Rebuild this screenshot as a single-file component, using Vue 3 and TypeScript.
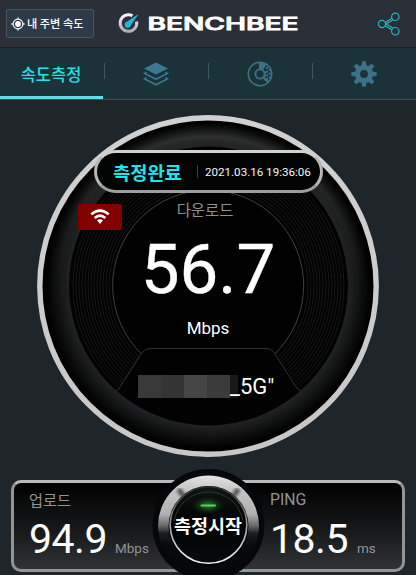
<script setup lang="ts">
interface Metric { label: string; value: string; unit: string; kind: string }

const download = { label: '다운로드', value: '56.7', unit: 'Mbps' }
const metrics: Metric[] = [
  { label: '업로드', value: '94.9', unit: 'Mbps', kind: 'upload' },
  { label: 'PING', value: '18.5', unit: 'ms', kind: 'ping' },
]
const rings: number[] = Array.from({ length: 13 }, (_, i) => 99.5 + i * 3)
const teeth: number[] = [0, 45, 90, 135, 180, 225, 270, 315]
const mosaic: string[] = ['a', 'b', 'c', 'd', 'e']
</script>

<template>
  <div class="app">
    <header class="header">
      <button class="nearby">
        <svg width="14" height="14" viewBox="0 0 14 14">
          <circle cx="7" cy="7" r="4.9" fill="none" stroke="#f4f6f7" stroke-width="1.1" />
          <circle cx="7" cy="7" r="2.9" fill="#fff" />
          <path d="M7 .4v2M7 11.6v2M.4 7h2M11.6 7h2" stroke="#f4f6f7" stroke-width="1.3" />
        </svg>
        <span>내 주변 속도</span>
      </button>
      <svg class="logo" width="184" height="28" viewBox="0 0 184 28">
        <defs>
          <linearGradient id="logoRing" x2="0" y2="1">
            <stop offset="0" stop-color="#f5f5f5" /><stop offset="1" stop-color="#a8adb0" />
          </linearGradient>
        </defs>
        <path d="M15.5 5.8A8.3 8.3 0 1 0 19.6 11.5" fill="none" stroke="url(#logoRing)" stroke-width="3" />
        <path d="M21.7 3.7L14 15.2A3.2 3.2 0 1 1 10.2 11.5Z" fill="#24b5d2" />
        <text x="30.500" y="20.200" class="wordmark" textLength="151" lengthAdjust="spacingAndGlyphs">BENCHBEE</text>
      </svg>
      <svg class="share" width="24" height="26" viewBox="0 0 24 26">
        <g fill="none" stroke="#2ab5b9" stroke-width="1.2">
          <path d="M8.1 11.4l6.6-4M9.1 13.1l6.7-4M8.1 14.7l6.6 4M9.1 12.9l6.7 4" />
          <circle cx="5" cy="13" r="3.6" fill="#2b2f37" />
          <circle cx="18.3" cy="5.8" r="3.7" fill="#2b2f37" />
          <circle cx="18.3" cy="20.2" r="3.7" fill="#2b2f37" />
        </g>
      </svg>
    </header>

    <nav class="tabs">
      <div class="tab active">속도측정</div>
      <div class="tab">
        <svg width="26" height="26" viewBox="0 0 26 26">
          <path d="M13 1.500L25 7.500L13 13.500L1 7.500Z" fill="#3d7890" />
          <path d="M3.500 11.300L1.700 12.500 13 18.200 24.300 12.500 22.500 11.300M3.500 16.700L1.700 18 13 23.800 24.300 18 22.500 16.700" fill="none" stroke="#3d7890" stroke-width="1.700" />
        </svg>
      </div>
      <div class="tab">
        <svg width="26" height="26" viewBox="0 0 26 26">
          <circle cx="13" cy="13" r="11.7" fill="none" stroke="#3d7185" stroke-width="1.6" />
          <path d="M13 1.3A11.7 11.7 0 0 1 19.6 3.4L15.6 9.5A4.4 4.4 0 0 0 12 8.7V1.4Z" fill="#3d7185" />
          <circle cx="13" cy="13" r="4.6" fill="none" stroke="#3d7185" stroke-width="1.9" />
          <path d="M16.5 16.5l4.6 4.6" stroke="#3d7185" stroke-width="2.2" />
          <path d="M20 6v14M22.8 8v10M18.2 10.5v5" fill="none" stroke="#3d7185" stroke-width="2" stroke-dasharray="2 1.7" />
        </svg>
      </div>
      <div class="tab">
        <svg width="26" height="26" viewBox="0 0 26 26">
          <path v-for="a in teeth" :key="a" d="M10.2 6L11.3.3h3.4L15.8 6Z" fill="#3d7185" :transform="`rotate(${a} 13 13)`" />
          <circle cx="13" cy="13" r="6.5" fill="none" stroke="#3d7185" stroke-width="5.2" />
        </svg>
      </div>
    </nav>

    <main class="dial">
      <svg class="dial-art" width="416" height="370" viewBox="0 101 416 370">
        <defs>
          <radialGradient id="bezel" gradientUnits="userSpaceOnUse" cx="208.5" cy="286" r="168">
            <stop offset=".83" stop-color="#202323" /><stop offset=".88" stop-color="#151717" />
            <stop offset=".96" stop-color="#020202" /><stop offset="1" stop-color="#000" />
          </radialGradient>
          <radialGradient id="shine" gradientUnits="userSpaceOnUse" cx="208" cy="286" r="168">
            <stop offset=".83" stop-color="#303232" stop-opacity=".2" /><stop offset=".89" stop-color="#333535" />
            <stop offset=".98" stop-color="#111" stop-opacity="0" />
          </radialGradient>
          <linearGradient id="topFade" x2="0" y2="1">
            <stop offset="0" stop-color="#fff" /><stop offset=".5" stop-color="#000" />
          </linearGradient>
          <mask id="upper"><rect x="30" y="110" width="356" height="350" fill="url(#topFade)" /></mask>
          <clipPath id="grooves"><path d="M0 100H416V400H307L300 391 275 353Q272 348.500 266 348.500H150Q145 348.500 142 353L117 391 110 400H0Z" /></clipPath>
          <linearGradient id="rim" x2="0" y2="1"><stop offset="0" stop-color="#d1d1d1" /><stop offset="1" stop-color="#c7c7c7" /></linearGradient>
        </defs>
        <circle cx="208" cy="286" r="168" fill="url(#bezel)" />
        <circle cx="208" cy="286" r="168" fill="url(#shine)" mask="url(#upper)" />
        <circle cx="208" cy="286" r="168.200" fill="none" stroke="url(#rim)" stroke-width="5.400" />
        <circle cx="208.500" cy="286" r="139.500" fill="#020202" />
        <g clip-path="url(#grooves)" fill="none">
          <circle v-for="r in rings" :key="r" cx="208.500" cy="286" :r="r" stroke="#171717" stroke-width="1" />
        </g>
        <path d="M141.500 354A95.500 95.500 0 1 1 274.800 354" fill="#000" stroke="#404040" />
        <path d="M116 391Q119 390 120 387L141 354Q144.500 348.500 150 348.500H266Q272 348.500 275 354L296 387Q298 390 301 391" fill="none" stroke="#303030" />
      </svg>

      <div class="status"><strong>측정완료</strong><i></i><time>2021.03.16 19:36:06</time></div>
      <div class="badge">
        <svg width="20" height="16" viewBox="0 0 20 16" fill="none" stroke="#fff">
          <path d="M1.300 5.400Q10-2.200 18.700 5.400M4.700 9Q10 4.300 15.300 9" stroke-width="2.500" />
          <path d="M7 11.300Q10 9 13 11.300L10 15Z" fill="#fff" stroke="none" />
        </svg>
      </div>
      <div class="reading">
        <span class="reading-label">{{ download.label }}</span>
        <span class="reading-value">{{ download.value }}</span>
        <span class="reading-unit">{{ download.unit }}</span>
      </div>
      <div class="network">
        <span class="mosaic"><i v-for="m in mosaic" :key="m" :class="m"></i></span>
        <span class="ssid">_5G"</span>
      </div>
    </main>

    <footer class="results">
      <section v-for="m in metrics" :key="m.kind" class="metric" :class="m.kind">
        <span class="metric-label">{{ m.label }}</span>
        <div class="metric-row"><b>{{ m.value }}</b><small>{{ m.unit }}</small></div>
      </section>
      <button class="start">
        <svg width="116" height="116" viewBox="150 467 116 116">
          <defs>
            <linearGradient id="metal" x2="0" y2="1">
              <stop offset="0" stop-color="#e4e4e4" /><stop offset=".15" stop-color="#c3c3c3" />
              <stop offset=".38" stop-color="#b2b2b2" /><stop offset=".5" stop-color="#666" />
              <stop offset=".57" stop-color="#1c1e21" /><stop offset=".7" stop-color="#08090b" /><stop offset="1" stop-color="#050607" />
            </linearGradient>
            <linearGradient id="lens" x2="0" y2="1"><stop offset="0" stop-color="#111516" /><stop offset=".5" stop-color="#000" /><stop offset="1" stop-color="#080b0c" /></linearGradient>
            <linearGradient id="edge" x2="0" y2="1"><stop offset="0" stop-color="#252829" /><stop offset=".5" stop-color="#a0a0a0" /><stop offset="1" stop-color="#f2f2f2" /></linearGradient>
            <radialGradient id="glow"><stop offset="0" stop-color="#35ba3d" stop-opacity=".75" /><stop offset="1" stop-color="#164018" stop-opacity="0" /></radialGradient>
            <filter id="soft"><feGaussianBlur stdDeviation="1.600" /></filter>
          </defs>
          <circle cx="208.500" cy="525" r="56" fill="#05070a" />
          <circle cx="208.500" cy="526" r="50.500" fill="url(#metal)" />
          <path d="M178.500 489l5 7M238.500 489l-5 7" stroke="#555" stroke-width="5" filter="url(#soft)" />
          <circle cx="208.500" cy="526" r="40" fill="#020303" />
          <circle cx="208.500" cy="525" r="38.300" fill="url(#lens)" stroke="url(#edge)" stroke-width="1.600" />
          <path d="M174 521A35 35 0 0 1 243 521" fill="none" stroke="#303435" />
          <ellipse cx="208" cy="505.500" rx="17" ry="9" fill="url(#glow)" />
          <rect x="200.500" y="504.500" width="15.500" height="2" rx="1" fill="#54d256" />
        </svg>
        <span>측정시작</span>
      </button>
    </footer>
  </div>
</template>

<style>
body { margin: 0; background: #1e252b; overflow: hidden; }
</style>

<style scoped>
* { box-sizing: border-box; }
.app { width: 416px; height: 575px; display: flex; flex-direction: column; overflow: hidden; background: #1e252b; color: #fff; font-family: Roboto, "Noto Sans CJK KR", sans-serif; }
svg { display: block; flex: none; }
button { padding: 0; font: inherit; color: inherit; }
.header { height: 47px; flex: none; display: flex; align-items: center; padding: 0 13px 0 6px; background: #2b2f37; }
.nearby { width: 88px; height: 29px; display: flex; align-items: center; gap: 2px; padding-left: 4px; border: 1px solid #465462; border-radius: 2px; background: #2d3b48; }
.nearby span { font: 500 11.2px/25px "Noto Sans CJK KR", sans-serif; white-space: nowrap; }
.logo { margin-left: 23px; }
.wordmark { font: 500 17.3px Inter, sans-serif; fill: #fff; stroke: #fff; stroke-width: .9px; }
.share { margin-left: auto; margin-right: 2px; }
.tabs { height: 53px; flex: none; display: grid; grid-template-columns: repeat(4, 104px); padding-left: 0; border-top: 1px solid #151e23; border-bottom: 1px solid #434d57; background: #1b3239; }
.tab { display: flex; align-items: center; justify-content: center; padding-top: 1px; background: linear-gradient(#3d5861, #3d5861) left 15px / 1px 16px no-repeat; }
.tab.active { width: 103px; padding: 4px 1px 0 0; border-bottom: 3px solid #62dced; background: none; color: #25e0e4; font: 500 16.5px/30px "Noto Sans CJK KR", sans-serif; }
.dial { position: relative; height: 379px; margin-top: 1px; flex: none; display: flex; flex-direction: column; }
.dial-art { position: absolute; top: 0; left: 0; }
.status { position: relative; display: flex; align-items: center; width: 229px; height: 43px; margin: 49px 0 0 94px; padding-left: 16px; border: 3px solid #b7b7b9; border-top-color: #d0d0d0; border-bottom-color: #9d9d9f; border-radius: 22px; background: #020303; white-space: nowrap; }
.status strong { width: 71px; color: #16e9ef; font: 700 18.7px/34px "Noto Sans CJK KR", sans-serif; }
.status i { width: 1px; height: 13px; margin-left: 13px; background: #3c3c3c; }
.status time { margin-left: 7px; font-size: 11.6px; line-height: 20px; color: #f5f5f5; }
.badge { position: relative; width: 44px; height: 26px; margin: 11px 0 0 78px; display: flex; align-items: center; justify-content: center; background: #820000; border-radius: 2px; }
.reading { position: relative; display: flex; flex-direction: column; align-items: center; margin-top: -32px; }
.reading-label { font: 400 15.4px/22px "Noto Sans CJK KR", sans-serif; color: #909090; margin-right: 6px; }
.reading-value { font-size: 69px; line-height: 80px; margin-top: 10px; -webkit-text-stroke: .4px #fff; }
.reading-unit { font-size: 17px; line-height: 20px; margin-top: 8px; }
.network { position: relative; display: flex; align-items: center; height: 24px; margin: 36px 0 0 138px; }
.mosaic { display: flex; height: 23px; }
.mosaic i { width: 23px; }
.mosaic .a { background: #393939; }
.mosaic .b { background: #343434; }
.mosaic .c { background: #464646; }
.mosaic .d { background: #3b3b3b; }
.mosaic .e { width: 8px; background: #181818; }
.ssid { margin: 2px 0 0 -8px; font-size: 22px; line-height: 24px; }
.results { position: relative; flex: none; width: 394px; height: 92px; margin-left: 11px; display: flex; justify-content: space-between; border: 3px solid #929496; border-top-color: #bababc; border-radius: 10px; background: linear-gradient(#010101, #191b1d 60%, #303336); }
.metric { display: flex; flex-direction: column; padding: 4px 0 0 15px; }
.metric.ping { width: 132px; padding-left: 0; }
.metric-label { font: 400 15.2px/24px "Noto Sans CJK KR", sans-serif; color: #949494; }
.ping .metric-label { font-family: Roboto, sans-serif; font-size: 15.8px; line-height: 25px; margin-bottom: -1px; }
.metric-row { display: flex; align-items: baseline; margin-top: 3px; }
.metric-row b { font-size: 41px; font-weight: 400; line-height: 50px; letter-spacing: -.5px; }
.metric-row small { margin-left: 8px; font-size: 13.5px; color: #929496; }
.ping .metric-row small { margin-left: 9px; }
.start { position: absolute; left: 136px; top: -16px; width: 116px; height: 116px; border: 0; background: none; }
.start svg { position: absolute; left: 0; top: 0; }
.start span { position: relative; display: block; font: 700 18.5px/28px "Noto Sans CJK KR", sans-serif; text-align: center; white-space: nowrap; }
</style>
